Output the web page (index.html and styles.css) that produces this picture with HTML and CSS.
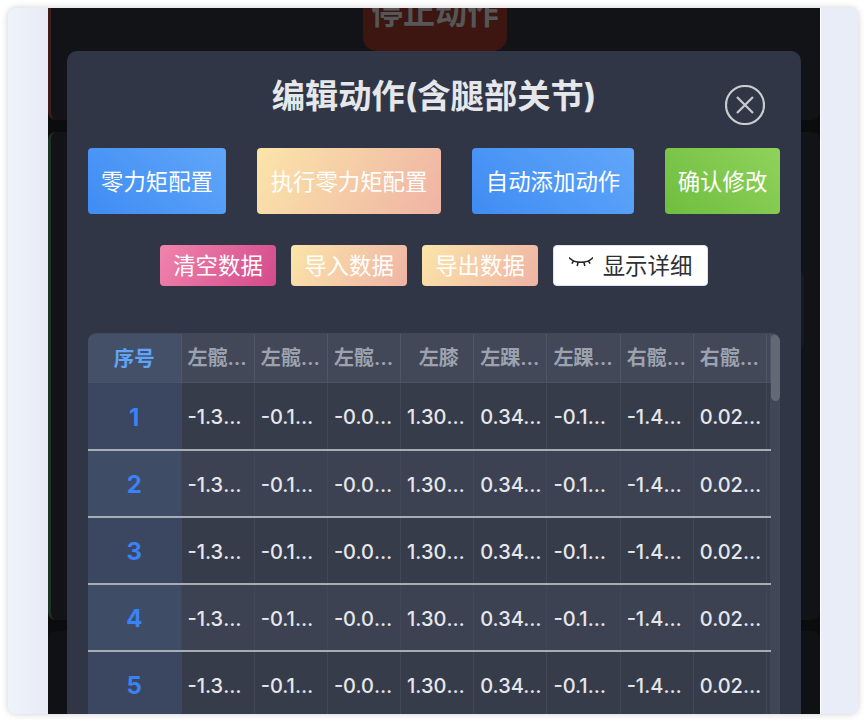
FILE: index.html
```html
<!DOCTYPE html>
<html lang="zh-CN">
<head>
<meta charset="utf-8">
<title>编辑动作</title>
<link rel="stylesheet" href="styles.css">
</head>
<body>
<div class="frame">
  <aside class="side side-left"></aside>
  <main class="stage">
    <section class="card card-red">
      <button class="stop">停止动作</button>
    </section>
    <section class="card card-green"><div class="dim-block"></div></section>
    <section class="card card-plain"></section>

    <div class="modal">
      <h2 class="title">编辑动作(含腿部关节)</h2>
      <button class="close" aria-label="关闭">
        <svg viewBox="0 0 40 40" width="40" height="40"><circle cx="20" cy="20" r="19" fill="none" stroke="#c9cbce" stroke-width="2.2"/><path d="M12 12 28 28M28 12 12 28" fill="none" stroke="#c9cbce" stroke-width="2.2"/></svg>
      </button>
      <div class="row-main">
        <button class="btn blue">零力矩配置</button>
        <button class="btn peach wide">执行零力矩配置</button>
        <button class="btn blue wide">自动添加动作</button>
        <button class="btn green">确认修改</button>
      </div>
      <div class="row-sub">
        <button class="btn small pink">清空数据</button>
        <button class="btn small peach">导入数据</button>
        <button class="btn small peach">导出数据</button>
        <button class="btn small white">
          <svg class="eye" viewBox="0 0 24 13" width="24" height="13"><path d="M1 1.5C6 6.5 18 6.5 23 1.5M1 1.5 0 .6M23 1.5 24 .6M4.5 4.2 2.8 6.6M9 5.6 8.2 9M15 5.6 15.8 9M19.5 4.2 21.2 6.6" fill="none" stroke="#222" stroke-width="1.5"/></svg>
          显示详细
        </button>
      </div>
      <div class="table-box">
        <div class="table-clip">
          <table class="grid">
            <colgroup>
              <col class="c-idx">
              <col class="c-v"><col class="c-v"><col class="c-v"><col class="c-v">
              <col class="c-v"><col class="c-v"><col class="c-v"><col class="c-v">
              <col class="c-end">
            </colgroup>
            <thead>
              <tr>
                <th class="idx">序号</th>
                <th>左髋关节俯仰</th><th>左髋关节横滚</th><th>左髋关节偏航</th><th>左膝</th>
                <th>左踝关节俯仰</th><th>左踝关节横滚</th><th>右髋关节俯仰</th><th>右髋关节横滚</th>
                <th></th>
              </tr>
            </thead>
            <tbody>
              <tr><td class="idx">1</td><td>-1.3482</td><td>-0.1527</td><td>-0.0361</td><td>1.30482</td><td>0.34127</td><td>-0.1436</td><td>-1.4025</td><td>0.02716</td><td></td></tr>
              <tr><td class="idx">2</td><td>-1.3482</td><td>-0.1527</td><td>-0.0361</td><td>1.30482</td><td>0.34127</td><td>-0.1436</td><td>-1.4025</td><td>0.02716</td><td></td></tr>
              <tr><td class="idx">3</td><td>-1.3482</td><td>-0.1527</td><td>-0.0361</td><td>1.30482</td><td>0.34127</td><td>-0.1436</td><td>-1.4025</td><td>0.02716</td><td></td></tr>
              <tr><td class="idx">4</td><td>-1.3482</td><td>-0.1527</td><td>-0.0361</td><td>1.30482</td><td>0.34127</td><td>-0.1436</td><td>-1.4025</td><td>0.02716</td><td></td></tr>
              <tr><td class="idx">5</td><td>-1.3482</td><td>-0.1527</td><td>-0.0361</td><td>1.30482</td><td>0.34127</td><td>-0.1436</td><td>-1.4025</td><td>0.02716</td><td></td></tr>
            </tbody>
          </table>
        </div>
        <div class="scroll-track"><div class="scroll-thumb"></div></div>
      </div>
    </div>
  </main>
  <aside class="side side-right"></aside>
</div>
</body>
</html>
```
FILE: styles.css
```css
* { box-sizing: border-box; }
html, body { margin: 0; height: 100%; background: #fff; overflow: hidden; }
body { padding: 8px; font-family: Inter, "Noto Sans CJK SC", sans-serif; }

.frame {
  width: 850px;
  height: 706px;
  display: flex;
  border-radius: 8px;
  overflow: hidden;
  box-shadow: 0 0 7px rgba(0, 0, 0, .2);
  background: #e9edf7;
}
.side { flex: none; }
.side-left { width: 40px; background: linear-gradient(90deg, #eff3fc, #e8ebf5); }
.side-right { width: 38px; background: #e9edf7; border-left: 1px solid #fff; }

.stage {
  position: relative;
  width: 772px;
  flex: none;
  background: #0b0c0e;
  display: flex;
  flex-direction: column;
  gap: 11px;
}
.card { background: #111316; flex: none; }
.card-red { height: 112px; border-left: 3px solid #3f1c1a; display: flex; justify-content: center; align-items: flex-end; border-radius: 0 0 8px 8px; padding-right: 1px; margin-bottom: 1px; }
.card-green { height: 488px; border-left: 3px solid #1d3323; border-radius: 8px; padding-top: 138px; }
.card-plain { flex: 1; border-radius: 8px 8px 0 0; background: #0f1114; }
.dim-block { width: 20px; height: 80px; margin-left: 733px; border-radius: 8px; background: #16191d; }
.stop {
  width: 144px;
  height: 68px;
  margin-bottom: 69px;
  border: 0;
  border-radius: 14px;
  background: #3d1612;
  color: #555658;
  font: 700 32px/1 Inter, "Noto Sans CJK SC", sans-serif;
  display: flex;
  align-items: flex-end;
  justify-content: center;
  padding: 0 0 22px;
}

.modal {
  position: absolute;
  left: 19px;
  top: 43px;
  width: 734px;
  height: 700px;
  padding: 21px 21px 0;
  background: #303646;
  border-radius: 10px;
}
.title {
  margin: 0 0 28px;
  height: 48px;
  text-align: center;
  color: #e5e7eb;
  font: 700 33.28px/48px Inter, "Noto Sans CJK SC", sans-serif;
}
.close {
  position: absolute;
  right: 36px;
  top: 34px;
  width: 40px;
  height: 40px;
  padding: 0;
  border: 0;
  background: none;
  display: block;
}
.close svg { display: block; }

.row-main { display: flex; justify-content: space-between; margin-bottom: 31px; }
.row-sub { display: flex; justify-content: center; gap: 15px; margin-bottom: 47px; }

.btn {
  height: 66px;
  padding: 2px 12px 0;
  border: 0;
  border-radius: 4px;
  color: #fff;
  font: 400 22.4px/1.2 Inter, "Noto Sans CJK SC", sans-serif;
  white-space: nowrap;
  display: flex;
  align-items: center;
  justify-content: center;
  width: 138px;
}
.btn.wide { width: 162px; }
.btn.peach.wide { width: 184px; }
.btn.green { width: 115px; }
.btn.small { height: 41px; width: 116px; }
.blue { background: linear-gradient(45deg, #3f8cf3, #60a6f9); }
.peach { background: linear-gradient(120deg, #fbe5a9, #efb3a4); }
.green { background: linear-gradient(45deg, #6fbe3f, #8fd25b); }
.pink { background: linear-gradient(120deg, #f084ac, #d34a8b); }
.btn.white { background: #fff; color: #2f2f33; border: 1px solid #dfe3ec; gap: 10px; width: 155px; padding: 1px 0 0; }
.eye { flex: none; margin-top: -5px; }

.table-box {
  display: flex;
  width: 692px;
  height: 420px;
  border-top: 1px solid #434859;
  border-radius: 8px 8px 0 0;
  overflow: hidden;
}
.table-clip { width: 683px; flex: none; overflow: hidden; }
.grid { width: 683px; table-layout: fixed; border-collapse: collapse; color: #e5e7eb; }
.c-idx { width: 93px; }
.c-v { width: 73.2px; }
.c-end { width: 4.4px; }
.grid th, .grid td {
  overflow: hidden;
  white-space: nowrap;
  text-overflow: ellipsis;
  text-align: left;
  border-right: 1px solid #424758;
}
.grid th {
  height: 48.5px;
  padding: 0 3px 3px 6px;
  background: #434859;
  color: #9ca3af;
  font-size: 20px;
  font-weight: 600;
  text-align: center;
  border-right-color: #50566a;
  border-bottom: 1px solid #4d5366;
}
.grid td {
  height: 67px;
  padding: 3px 3px 0 6px;
  background: #373c4b;
  font-size: 20px;
  font-weight: 500;
  border-bottom: 2px solid #a8acb5;
}
.grid tbody tr:nth-child(even) td { background: #3c4252; }
.grid tbody tr:nth-child(even) td.idx { background: #3f4c66; }
.grid th.idx { background: #445068; color: #60a5fa; text-align: center; padding: 0 0 3px; font-size: 20.5px; }
.grid td.idx {
  background: #3b4760;
  color: #3b82f6;
  font-size: 24px;
  font-weight: 700;
  text-align: center;
  padding: 3px 0 0;
}
.scroll-track { width: 9px; flex: none; background: #424757; }
.scroll-thumb { width: 9px; height: 67px; border-radius: 5px; background: #626876; }
```
